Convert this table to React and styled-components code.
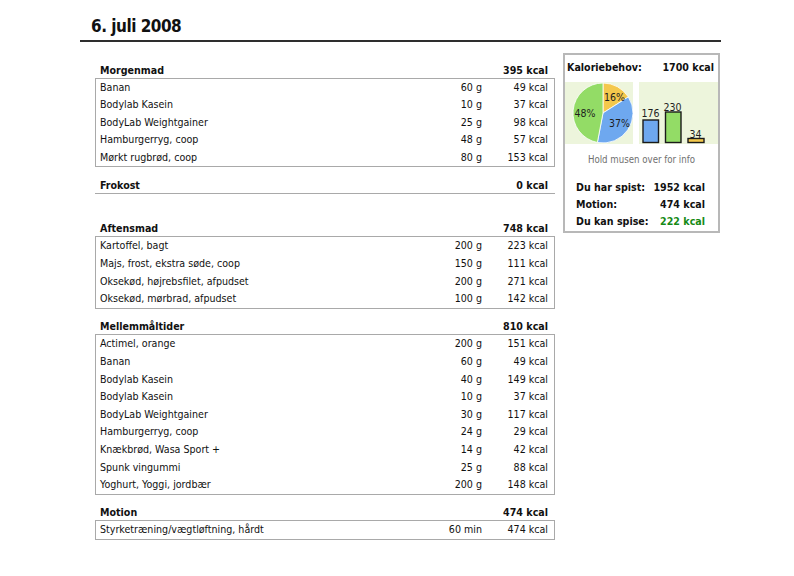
import React from "react";
import styled, { createGlobalStyle } from "styled-components";

const GlobalStyle = createGlobalStyle`
  html, body { margin: 0; padding: 0; background: #fff; }
  body { font-family: "DejaVu Sans Condensed", "DejaVu Sans", Verdana, sans-serif; font-stretch: condensed; color: #111; }
`;

const Page = styled.div`
  width: 641px;
  margin-left: 80px;
`;

const Title = styled.h1`
  margin: 0;
  padding: 17px 0 4px 0;
  font-size: 17px;
  line-height: 19px;
  letter-spacing: -0.5px;
  font-weight: bold;
  color: #111;
  border-bottom: 2px solid #2e2e2e;
`;

const TitleText = styled.span`
  display: inline-block;
  margin-left: 11px;
`;

const Content = styled.div`
  display: flex;
  align-items: flex-start;
  padding-left: 15px;
  margin-top: 11px;
`;

const MainCol = styled.div`
  width: 460px;
  margin-top: 9.5px;
`;

const Section = styled.section`
  margin-bottom: 10.5px;
`;

const SectionHead = styled.div`
  display: flex;
  justify-content: space-between;
  height: 15px;
  line-height: 15px;
  padding: 0 7px 0 5px;
  font-size: 10.6px;
  font-weight: bold;
`;

const Box = styled.div`
  border: 1px solid #a9a9a9;
`;

const EmptyBox = styled.div`
  border-top: 1px solid #a9a9a9;
  height: 17px;
`;

const Row = styled.div`
  display: grid;
  grid-template-columns: 1fr 60px 66px;
  height: 17.6px;
  line-height: 17.6px;
  padding: 0 6px 0 4px;
  font-size: 10.6px;
  white-space: nowrap;
`;

const Num = styled.span`
  text-align: right;
`;

const Sidebar = styled.aside`
  width: 153px;
  margin-left: 8px;
  border: 2px solid #b8b8b8;
  padding-bottom: 1px;
`;

const SideTitle = styled.div`
  display: flex;
  justify-content: space-between;
  margin-top: 4px;
  padding: 0 4px 0 2px;
  line-height: 16px;
  font-size: 10.6px;
  font-weight: bold;
`;

const Charts = styled.div`
  display: flex;
  gap: 6px;
  margin-top: 7px;
  height: 62px;
`;

const ChartPanel = styled.div`
  width: ${(p) => p.$w}px;
  flex: ${(p) => (p.$grow ? 1 : "none")};
  background: #edf5dc;
  height: 62px;
  svg { display: block; }
`;

const Hint = styled.div`
  margin-top: 10px;
  line-height: 12px;
  text-align: center;
  font-size: 9.6px;
  color: #707070;
`;

const Stats = styled.div`
  margin-top: 12.5px;
  padding: 0 13px 0 11px;
`;

const StatRow = styled.div`
  display: flex;
  justify-content: space-between;
  line-height: 17px;
  font-size: 10.6px;
  font-weight: bold;
  color: ${(p) => p.$valueColor || "#111"};
  & > span:first-child { color: #111; }
`;

const sections = [
  {
    name: "Morgenmad",
    total: "395 kcal",
    items: [
      ["Banan", "60 g", "49 kcal"],
      ["Bodylab Kasein", "10 g", "37 kcal"],
      ["BodyLab Weightgainer", "25 g", "98 kcal"],
      ["Hamburgerryg, coop", "48 g", "57 kcal"],
      ["Mørkt rugbrød, coop", "80 g", "153 kcal"],
    ],
  },
  { name: "Frokost", total: "0 kcal", items: [] },
  {
    name: "Aftensmad",
    total: "748 kcal",
    items: [
      ["Kartoffel, bagt", "200 g", "223 kcal"],
      ["Majs, frost, ekstra søde, coop", "150 g", "111 kcal"],
      ["Oksekød, højrebsfilet, afpudset", "200 g", "271 kcal"],
      ["Oksekød, mørbrad, afpudset", "100 g", "142 kcal"],
    ],
  },
  {
    name: "Mellemmåltider",
    total: "810 kcal",
    items: [
      ["Actimel, orange", "200 g", "151 kcal"],
      ["Banan", "60 g", "49 kcal"],
      ["Bodylab Kasein", "40 g", "149 kcal"],
      ["Bodylab Kasein", "10 g", "37 kcal"],
      ["BodyLab Weightgainer", "30 g", "117 kcal"],
      ["Hamburgerryg, coop", "24 g", "29 kcal"],
      ["Knækbrød, Wasa Sport +", "14 g", "42 kcal"],
      ["Spunk vingummi", "25 g", "88 kcal"],
      ["Yoghurt, Yoggi, jordbær", "200 g", "148 kcal"],
    ],
  },
  {
    name: "Motion",
    total: "474 kcal",
    items: [["Styrketræning/vægtløftning, hårdt", "60 min", "474 kcal"]],
  },
];

const labelStyle = {
  fontFamily: "DejaVu Sans Condensed, DejaVu Sans, Verdana, sans-serif",
  fontSize: 10.5,
  fill: "#1e1e1e",
  textAnchor: "middle",
  dominantBaseline: "central",
};

function Pie() {
  return (
    <svg width="68" height="62" viewBox="0 0 68 62">
      <path d="M38 31 L38 1 A30 30 0 0 1 63.33 14.93 Z" fill="#f4c84c" stroke="#fff" strokeWidth="0.8" />
      <path d="M38 31 L63.33 14.93 A30 30 0 0 1 32.38 60.47 Z" fill="#6ea8ef" stroke="#fff" strokeWidth="0.8" />
      <path d="M38 31 L32.38 60.47 A30 30 0 0 1 38 1 Z" fill="#93dc66" stroke="#fff" strokeWidth="0.8" />
      <text x="49.5" y="14.5" style={labelStyle}>16%</text>
      <text x="54.5" y="40.5" style={labelStyle}>37%</text>
      <text x="20" y="30.5" style={labelStyle}>48%</text>
    </svg>
  );
}

function Bars() {
  return (
    <svg width="79" height="62" viewBox="0 0 79 62">
      <rect x="4" y="38" width="15.5" height="22.5" fill="#6ea8ef" stroke="#1a1a1a" strokeWidth="1.4" />
      <rect x="26.5" y="30" width="15.5" height="30.5" fill="#93dc66" stroke="#1a1a1a" strokeWidth="1.4" />
      <rect x="49" y="56.5" width="16" height="4" fill="#f4c84c" stroke="#1a1a1a" strokeWidth="1.4" />
      <text x="11.5" y="30.5" style={labelStyle}>176</text>
      <text x="33.5" y="24.5" style={labelStyle}>230</text>
      <text x="56.5" y="51.5" style={labelStyle}>34</text>
    </svg>
  );
}

export default function App() {
  return (
    <>
      <GlobalStyle />
      <Page>
        <Title><TitleText>6. juli 2008</TitleText></Title>
        <Content>
          <MainCol>
            {sections.map((s) => (
              <Section key={s.name}>
                <SectionHead>
                  <span>{s.name}</span>
                  <span>{s.total}</span>
                </SectionHead>
                {s.items.length ? (
                  <Box>
                    {s.items.map((it, i) => (
                      <Row key={i}>
                        <span>{it[0]}</span>
                        <Num>{it[1]}</Num>
                        <Num>{it[2]}</Num>
                      </Row>
                    ))}
                  </Box>
                ) : (
                  <EmptyBox />
                )}
              </Section>
            ))}
          </MainCol>
          <Sidebar>
            <SideTitle>
              <span>Kaloriebehov:</span>
              <span>1700 kcal</span>
            </SideTitle>
            <Charts>
              <ChartPanel $w={68}><Pie /></ChartPanel>
              <ChartPanel $grow><Bars /></ChartPanel>
            </Charts>
            <Hint>Hold musen over for info</Hint>
            <Stats>
              <StatRow><span>Du har spist:</span><span>1952 kcal</span></StatRow>
              <StatRow><span>Motion:</span><span>474 kcal</span></StatRow>
              <StatRow $valueColor="#168a16"><span>Du kan spise:</span><span>222 kcal</span></StatRow>
            </Stats>
          </Sidebar>
        </Content>
      </Page>
    </>
  );
}
